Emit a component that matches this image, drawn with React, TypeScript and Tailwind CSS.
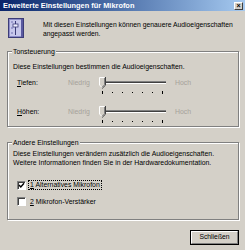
import React from "react";

const face = "bg-[#d4d0c8]";

// Etched group frame with the caption sitting on the top edge
function GroupBox({ title, className, children }: { title: string; className?: string; children: React.ReactNode }) {
  return (
    <div className={`relative border border-[#808080] shadow-[1px_1px_0_#fff,inset_1px_1px_0_#fff] ${className ?? ""}`}>
      <span className={`absolute -top-[5px] left-[4px] px-[1px] leading-[9px] ${face}`}>{title}</span>
      {children}
    </div>
  );
}

function MixerIcon() {
  return (
    <svg width="16" height="20" viewBox="0 0 16 20" className="shrink-0">
      <rect x="0.5" y="0.5" width="15" height="19" fill="#8c8cc8" stroke="#3c3c78" />
      <rect x="2" y="2" width="11" height="16" fill="#c8c8ec" />
      <rect x="13" y="1" width="2" height="18" fill="#5a5aa0" />
      <line x1="7.5" y1="3" x2="7.5" y2="17" stroke="#3c3c78" />
      <rect x="5" y="6" width="5" height="3" fill="#f0f0ff" stroke="#3c3c78" strokeWidth="0.8" />
      <line x1="3" y1="4" x2="5" y2="4" stroke="#7070b0" />
      <line x1="3" y1="10" x2="5" y2="10" stroke="#7070b0" />
      <line x1="3" y1="15" x2="5" y2="15" stroke="#7070b0" />
    </svg>
  );
}

function TrackBar() {
  const ticks = [5, 15, 25, 35, 45, 55, 65];
  return (
    <svg width="72" height="18" viewBox="0 0 72 18" className="block shrink-0">
      {/* channel */}
      <rect x="5" y="4" width="64" height="1" fill="#808080" />
      <rect x="5" y="5" width="64" height="1" fill="#404040" />
      <rect x="5" y="6" width="64" height="1" fill="#ffffff" />
      {/* thumb */}
      <polygon points="2,0 8,0 8,8 5,11 2,8" fill="#d4d0c8" />
      <polyline points="2.5,8 2.5,0.5 7.5,0.5" fill="none" stroke="#ffffff" />
      <polyline points="8.5,0 8.5,8.2 5,11.5" fill="none" stroke="#404040" />
      <polyline points="7.5,1 7.5,7.8 5,10.3" fill="none" stroke="#808080" />
      <line x1="2.5" y1="8" x2="5" y2="10.5" stroke="#ffffff" />
      {ticks.map((x, i) => (
        <rect
          key={x}
          x={x}
          y={i === 0 || i === ticks.length - 1 ? 14 : 15}
          width="1"
          height={i === 0 || i === ticks.length - 1 ? 3 : 1}
          fill="#000"
        />
      ))}
    </svg>
  );
}

function SliderRow({ label, mnemonic, className }: { label: string; mnemonic: string; className?: string }) {
  return (
    <div className={`flex items-start whitespace-nowrap ${className ?? ""}`}>
      <span className="w-[51px] shrink-0 leading-[11px]">
        <u>{mnemonic}</u>
        {label}
      </span>
      <span className="w-[29px] shrink-0 leading-[11px] text-[#a6a29a]">Niedrig</span>
      <TrackBar />
      <span className="ml-[6px] leading-[11px] text-[#a6a29a]">Hoch</span>
    </div>
  );
}

function CheckBox({ checked }: { checked: boolean }) {
  return (
    <span className="flex h-[9px] w-[9px] shrink-0 items-center justify-center border-t border-l border-[#808080] border-r border-b border-r-white border-b-white bg-white shadow-[inset_1px_1px_0_#404040]">
      {checked && (
        <svg width="7" height="7" viewBox="0 0 7 7">
          <path d="M1 3 L2.8 5 L6 1.2" fill="none" stroke="#000" strokeWidth="1.4" />
        </svg>
      )}
    </span>
  );
}

export default function App() {
  return (
    <div
      className={`flex h-[250px] w-[245px] flex-col overflow-hidden whitespace-nowrap text-[6.9px] text-black ${face}`}
      style={{ fontFamily: '"Liberation Sans", Arial, sans-serif' }}
    >
      {/* Title bar */}
      <div className="flex h-[11px] shrink-0 items-center justify-between bg-gradient-to-r from-[#0a246a] to-[#a6caf0] pl-[3px] pr-[2px]">
        <span className="text-[7.4px] font-bold leading-[11px] text-white">Erweiterte Einstellungen für Mikrofon</span>
        <span className="flex h-[8px] w-[9px] items-center justify-center border border-t-white border-l-white border-r-[#404040] border-b-[#404040] bg-[#d4d0c8] text-[7px] font-bold leading-none">
          ×
        </span>
      </div>

      {/* Header */}
      <div className="mt-[7px] flex items-start pl-[8px]">
        <MixerIcon />
        <p className="ml-[19px] mt-[3px] text-[6.8px] leading-[8.5px]">
          Mit diesen Einstellungen können genauere Audioeigenschaften
          <br />
          angepasst werden.
        </p>
      </div>

      <GroupBox title="Tonsteuerung" className="ml-[7px] mr-[6px] mt-[13px] shrink-0 pb-[2px] pl-[5px] pt-[10px]">
        <p className="leading-[9px]">Diese Einstellungen bestimmen die Audioeigenschaften.</p>
        <div className="pl-[4px]">
          <SliderRow mnemonic="T" label="iefen:" className="mt-[6px]" />
          <SliderRow mnemonic="H" label="öhen:" className="mt-[11px]" />
        </div>
      </GroupBox>

      <GroupBox title="Andere Einstellungen" className="ml-[7px] mr-[6px] mt-[15px] shrink-0 pb-[13px] pl-[5px] pt-[7px]">
        <p className="leading-[8.5px]">
          Diese Einstellungen verändern zusätzlich die Audioeigenschaften.
          <br />
          Weitere Informationen finden Sie in der Hardwaredokumentation.
        </p>
        <div className="ml-[4px] mt-[13px] flex items-center">
          <CheckBox checked />
          <span className="ml-[2px] border border-dotted border-black px-[1px] leading-[8px]">
            <u>1</u> Alternatives Mikrofon
          </span>
        </div>
        <div className="ml-[4px] mt-[7px] flex items-center">
          <CheckBox checked={false} />
          <span className="ml-[3px] px-[1px] leading-[8px]">
            <u>2</u> Mikrofon-Verstärker
          </span>
        </div>
      </GroupBox>

      {/* Footer */}
      <div className="mr-[6px] mt-[10px] flex justify-end">
        <button className="h-[15px] w-[49px] border border-black p-0 text-[6.8px] leading-none">
          <span className="flex h-full w-full items-center justify-center border border-t-white border-l-white border-r-[#808080] border-b-[#808080]">
            Schließen
          </span>
        </button>
      </div>
    </div>
  );
}
